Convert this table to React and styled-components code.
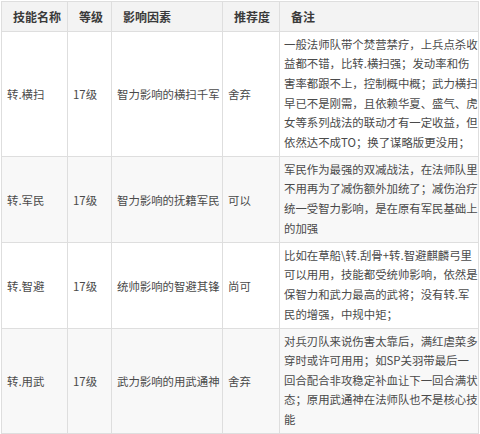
import React from "react";
import styled, { createGlobalStyle } from "styled-components";

const rows = [
  {
    name: "转.横扫",
    level: "17级",
    factor: "智力影响的横扫千军",
    rate: "舍弃",
    height: 125,
    notes: [
      "一般法师队带个焚营禁疗，上兵点杀收",
      "益都不错，比转.横扫强；发动率和伤",
      "害率都跟不上，控制概中概；武力横扫",
      "早已不是刚需，且依赖华夏、盛气、虎",
      "女等系列战法的联动才有一定收益，但",
      "依然达不成TO；换了谋略版更没用；",
    ],
  },
  {
    name: "转.军民",
    level: "17级",
    factor: "智力影响的抚籍军民",
    rate: "可以",
    height: 86,
    notes: [
      "军民作为最强的双减战法，在法师队里",
      "不用再为了减伤额外加统了；减伤治疗",
      "统一受智力影响，是在原有军民基础上",
      "的加强",
    ],
  },
  {
    name: "转.智避",
    level: "17级",
    factor: "统帅影响的智避其锋",
    rate: "尚可",
    height: 86,
    notes: [
      "比如在草船\\转.刮骨+转.智避麒麟弓里",
      "可以用用，技能都受统帅影响，依然是",
      "保智力和武力最高的武将；没有转.军",
      "民的增强，中规中矩；",
    ],
  },
  {
    name: "转.用武",
    level: "17级",
    factor: "武力影响的用武通神",
    rate: "舍弃",
    height: 105,
    notes: [
      "对兵刃队来说伤害太靠后，满红虐菜多",
      "穿时或许可用用；如SP关羽带最后一",
      "回合配合非攻稳定补血让下一回合满状",
      "态；原用武通神在法师队也不是核心技",
      "能",
    ],
  },
];

const widths = [66, 44, 111, 57, 199];

function App() {
  return (
    <>
      <GlobalStyle />
      <Wrapper>
        <Table>
          <colgroup>
            {widths.map((w, i) => (
              <Col key={i} $w={w} />
            ))}
          </colgroup>
          <thead>
            <tr>
              <Th>技能名称</Th>
              <Th>等级</Th>
              <Th>影响因素</Th>
              <Th>推荐度</Th>
              <Th>备注</Th>
            </tr>
          </thead>
          <tbody>
            {rows.map((r, i) => (
              <Row key={r.name} $odd={i % 2 === 1} $h={r.height}>
                <Td>{r.name}</Td>
                <Td>{r.level}</Td>
                <Td>{r.factor}</Td>
                <Td>{r.rate}</Td>
                <NoteTd>
                  {r.notes.map((line) => (
                    <Line key={line}>{line}</Line>
                  ))}
                </NoteTd>
              </Row>
            ))}
          </tbody>
        </Table>
      </Wrapper>
    </>
  );
}

export default App;

const GlobalStyle = createGlobalStyle`
  body {
    margin: 0;
    background: #ffffff;
    font-family: "Noto Sans CJK SC", "Noto Sans", sans-serif;
  }
`;

const Wrapper = styled.div`
  padding: 1px 2px 0 1px;
`;

const Table = styled.table`
  border-collapse: collapse;
  table-layout: fixed;
  width: 477px;
  font-size: 11.4px;
  color: #4a4a4a;
`;

const Col = styled.col`
  width: ${(p) => p.$w}px;
`;

const Th = styled.th`
  height: 29px;
  padding: 0 0 0 11px;
  text-align: left;
  font-weight: bold;
  font-size: 12px;
  color: #3a3a3a;
  background: #f3f3f3;
  border: 1px solid #dedede;
  white-space: nowrap;
  overflow: hidden;
`;

const Row = styled.tr`
  height: ${(p) => p.$h}px;
  background: ${(p) => (p.$odd ? "#f8f8f8" : "#ffffff")};
`;

const Td = styled.td`
  padding: 0 2px 0 5px;
  border: 1px solid #dedede;
  vertical-align: middle;
  white-space: nowrap;
  overflow: hidden;
`;

const NoteTd = styled(Td)`
  padding: 2px 0 3px 4px;
`;

const Line = styled.div`
  line-height: 19.6px;
  white-space: nowrap;
`;
